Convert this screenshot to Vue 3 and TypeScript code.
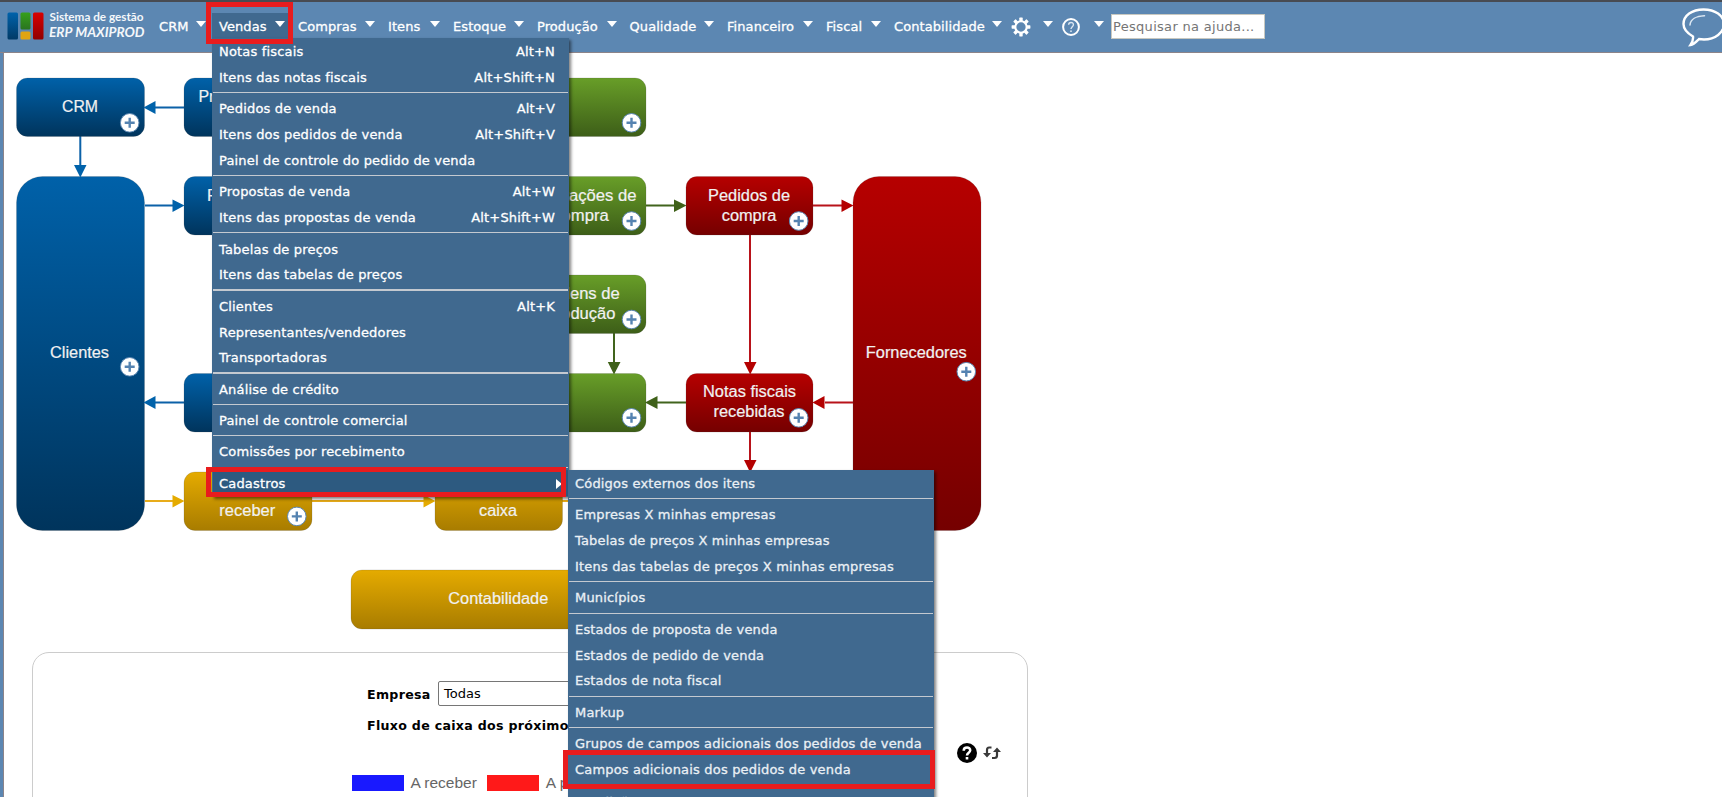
<script setup lang="ts">
interface NavItem { label: string; width: number; open?: boolean }
interface MenuItem { label: string; keys?: string; active?: boolean }
interface DiagramNode { x: number; y: number; w: number; h: number; tone: string; r?: number }
interface Label { x: number; y: number; text: string; len: number }

const nav: NavItem[] = [
  { label: 'CRM', width: 47 },
  { label: 'Vendas', width: 66, open: true },
  { label: 'Compras', width: 77 },
  { label: 'Itens', width: 52 },
  { label: 'Estoque', width: 71 },
  { label: 'Produção', width: 79.5 },
  { label: 'Qualidade', width: 84.5 },
  { label: 'Financeiro', width: 86 },
  { label: 'Fiscal', width: 55 },
  { label: 'Contabilidade', width: 108 },
]

const salesMenu: MenuItem[][] = [
  [{ label: 'Notas fiscais', keys: 'Alt+N' }, { label: 'Itens das notas fiscais', keys: 'Alt+Shift+N' }],
  [
    { label: 'Pedidos de venda', keys: 'Alt+V' },
    { label: 'Itens dos pedidos de venda', keys: 'Alt+Shift+V' },
    { label: 'Painel de controle do pedido de venda' },
  ],
  [{ label: 'Propostas de venda', keys: 'Alt+W' }, { label: 'Itens das propostas de venda', keys: 'Alt+Shift+W' }],
  [{ label: 'Tabelas de preços' }, { label: 'Itens das tabelas de preços' }],
  [{ label: 'Clientes', keys: 'Alt+K' }, { label: 'Representantes/vendedores' }, { label: 'Transportadoras' }],
  [{ label: 'Análise de crédito' }],
  [{ label: 'Painel de controle comercial' }],
  [{ label: 'Comissões por recebimento' }],
  [{ label: 'Cadastros', active: true }],
]

const recordsMenu: MenuItem[][] = [
  [{ label: 'Códigos externos dos itens' }],
  [
    { label: 'Empresas X minhas empresas' },
    { label: 'Tabelas de preços X minhas empresas' },
    { label: 'Itens das tabelas de preços X minhas empresas' },
  ],
  [{ label: 'Municípios' }],
  [{ label: 'Estados de proposta de venda' }, { label: 'Estados de pedido de venda' }, { label: 'Estados de nota fiscal' }],
  [{ label: 'Markup' }],
  [
    { label: 'Grupos de campos adicionais dos pedidos de venda' },
    { label: 'Campos adicionais dos pedidos de venda' },
  ],
  [{ label: 'Condições' }],
]

const nodes: DiagramNode[] = [
  { x: 16.5, y: 78, w: 128, h: 58.5, tone: 'blue' },
  { x: 184, y: 78, w: 128, h: 58.5, tone: 'blue' },
  { x: 518, y: 78, w: 128, h: 58.5, tone: 'green' },
  { x: 16.5, y: 176.5, w: 128, h: 354, tone: 'blue', r: 26 },
  { x: 184, y: 176.5, w: 128, h: 58.5, tone: 'blue' },
  { x: 518, y: 176.5, w: 128, h: 58.5, tone: 'green' },
  { x: 686, y: 176.5, w: 127, h: 58.5, tone: 'red' },
  { x: 853, y: 176.5, w: 128, h: 354, tone: 'red', r: 26 },
  { x: 518, y: 275, w: 128, h: 58.5, tone: 'green' },
  { x: 184, y: 373.5, w: 128, h: 58.5, tone: 'blue' },
  { x: 518, y: 373.5, w: 128, h: 58.5, tone: 'green' },
  { x: 686, y: 373.5, w: 127, h: 58.5, tone: 'red' },
  { x: 184, y: 472, w: 128, h: 58.5, tone: 'gold' },
  { x: 435, y: 472, w: 127.5, h: 58.5, tone: 'gold' },
  { x: 351, y: 570, w: 295, h: 59, tone: 'gold' },
]

const labels: Label[] = [
  { x: 80, y: 112, text: 'CRM', len: 36 },
  { x: 248.5, y: 101.5, text: 'Pré-propostas', len: 100 },
  { x: 79.5, y: 358, text: 'Clientes', len: 59 },
  { x: 248, y: 200.5, text: 'Pedidos de', len: 82 },
  { x: 580.5, y: 200.5, text: 'Solicitações de', len: 112 },
  { x: 581, y: 220.7, text: 'compra', len: 55.5 },
  { x: 749, y: 200.5, text: 'Pedidos de', len: 82 },
  { x: 749, y: 220.7, text: 'compra', len: 54.5 },
  { x: 916.3, y: 358, text: 'Fornecedores', len: 101 },
  { x: 581, y: 299, text: 'Ordens de', len: 77.5 },
  { x: 581, y: 319, text: 'produção', len: 69 },
  { x: 749.5, y: 397, text: 'Notas fiscais', len: 93 },
  { x: 749, y: 417.3, text: 'recebidas', len: 71 },
  { x: 247.3, y: 515.5, text: 'receber', len: 56 },
  { x: 498, y: 515.5, text: 'caixa', len: 38 },
  { x: 498.3, y: 604, text: 'Contabilidade', len: 100 },
]

const pluses: [number, number][] = [
  [129.7, 122.8], [631.5, 122.8], [631.5, 221], [798.7, 221], [631.5, 319.5],
  [631.5, 417.8], [798.7, 417.8], [966.3, 371.7], [129.7, 366.8], [296.8, 516.4],
]
</script>

<template>
  <div class="page">
    <header class="topbar">
      <svg class="logo" width="150" height="50" viewBox="0 2 150 50">
        <defs>
          <linearGradient id="lb" x2="0" y2="1"><stop stop-color="#0062ab" /><stop offset="1" stop-color="#013a66" /></linearGradient>
          <linearGradient id="lg" x2="0" y2="1"><stop stop-color="#36a01b" /><stop offset="1" stop-color="#2a7420" /></linearGradient>
          <linearGradient id="lr" x2="0" y2="1"><stop stop-color="#d90000" /><stop offset="1" stop-color="#900000" /></linearGradient>
        </defs>
        <rect x="7.5" y="12.5" width="10.5" height="27" rx="1.5" fill="url(#lb)" />
        <rect x="20.5" y="12.5" width="10" height="17" rx="1.5" fill="url(#lg)" />
        <rect x="20.5" y="31.5" width="10" height="8" rx="1.5" fill="#e0a412" />
        <rect x="33" y="12.5" width="10.5" height="27" rx="1.5" fill="url(#lr)" />
        <text x="49.5" y="20.5" font-size="11" font-weight="700" textLength="94" lengthAdjust="spacingAndGlyphs">Sistema de gestão</text>
        <text x="49" y="36.8" font-size="12.3" font-weight="700" font-style="italic" textLength="95.5" lengthAdjust="spacingAndGlyphs">ERP MAXIPROD</text>
      </svg>
      <nav class="nav">
        <div v-for="n in nav" :key="n.label" class="nav-item" :class="{ open: n.open }" :style="{ width: n.width + 'px' }">
          <span>{{ n.label }}</span><i class="caret"></i>
        </div>
      </nav>
      <svg class="gear" width="20" height="20" viewBox="-10 -10 20 20">
        <g fill="#fff">
          <rect v-for="k in 8" :key="k" x="-1.7" y="-9.4" width="3.4" height="4.5" rx=".6" :transform="`rotate(${k * 45})`" />
        </g>
        <circle r="5.7" fill="#5c87b2" stroke="#fff" stroke-width="2.1" />
      </svg>
      <i class="caret gear-caret"></i>
      <svg class="help" width="20" height="20" viewBox="-10 -10 20 20">
        <circle r="7.9" fill="none" stroke="#fff" stroke-width="2" />
        <path d="M-2.4-2.2C-2.3-5.4 2.5-5.3 2.4-2.2 2.3-.4 0-.2 0 2" fill="none" stroke="#dbe6f1" stroke-width="1.4" />
        <circle cy="4.2" r=".9" fill="#dbe6f1" />
      </svg>
      <i class="caret help-caret"></i>
      <input class="search" type="text" placeholder="Pesquisar na ajuda..." />
      <svg class="chat" width="40" height="42" viewBox="0 0 40 42">
        <path d="M11 28.5C5 25 1.5 21.5 1.5 16 1.5 7.5 10 1.5 21.5 1.5S42 7.5 42 16 33 31.5 22 31.5L17 31C14 34 12 36.5 8.5 37 10.5 34 11.5 32 11 28.5Z" fill="none" stroke="#fff" stroke-width="2.4" />
        <path d="M8 17C8.5 11.5 14 8 22.5 7.8" fill="none" stroke="#dce8f3" stroke-width="1.5" stroke-linecap="round" />
      </svg>
    </header>

    <main class="content">
      <svg class="diagram" width="1040" height="590" viewBox="4 53 1040 590">
        <defs>
          <linearGradient id="blue" x2="0" y2="1"><stop stop-color="#0061a9" /><stop offset="1" stop-color="#00345c" /></linearGradient>
          <linearGradient id="green" x2="0" y2="1"><stop stop-color="#689e28" /><stop offset="1" stop-color="#3d5e18" /></linearGradient>
          <linearGradient id="red" x2="0" y2="1"><stop stop-color="#b60000" /><stop offset="1" stop-color="#750000" /></linearGradient>
          <linearGradient id="gold" x2="0" y2="1"><stop stop-color="#e5ab00" /><stop offset="1" stop-color="#a87c00" /></linearGradient>
        </defs>
        <g fill="none" stroke-width="2">
          <path d="M155 107.5H184M80.3 136V165M145 205.5H173M155 402.5H184" stroke="#0b61a8" />
          <path d="M646 205.5H675M614 333V363M657 402.5H686" stroke="#41641d" />
          <path d="M813 205.5H842M750 235V363M825 402.5H853M750 432V461" stroke="#b8131a" />
          <path d="M145 501H173M312 501H424M562 501H602" stroke="#e8ac1a" />
        </g>
        <rect
          v-for="(n, i) in nodes" :key="i" :x="n.x" :y="n.y" :width="n.w" :height="n.h" :rx="n.r ?? 11"
          :fill="`url(#${n.tone})`" stroke="#444" stroke-opacity=".25" stroke-width=".7"
        />
        <path d="M143.5 107.5 155.5 101V114ZM74 165H86.5L80.3 177.5ZM172.5 199.5V212L184.5 205.5ZM143.5 402.5 155.5 396V409Z" fill="#0062aa" />
        <path d="M674 199.5V212L686.5 205.5ZM607.8 362H620.5L614 374.5ZM645 402.5 657.5 396V409Z" fill="#3f6119" />
        <path d="M841.5 199.5V212L853.5 205.5ZM744 362H756.5L750.2 374.5ZM812.5 402.5 824.5 396V409ZM744 460H756.5L750.2 472.5Z" fill="#b40000" />
        <path d="M172.5 495V507.5L184.5 501ZM423.5 495V507.5L435.5 501Z" fill="#e5ab00" />
        <text v-for="(l, i) in labels" :key="i" :x="l.x" :y="l.y" :textLength="l.len" lengthAdjust="spacingAndGlyphs">{{ l.text }}</text>
        <g v-for="([x, y], i) in pluses" :key="i" :transform="`translate(${x} ${y})`">
          <circle r="9.3" fill="#fff" stroke="#5c87b2" stroke-width="1" />
          <path d="M-5 0H5M0-5V5" stroke="#5583b1" stroke-width="2.4" />
        </g>
      </svg>

      <section class="panel">
        <div class="field">
          <b>Empresa</b>
          <div class="select">Todas</div>
        </div>
        <div class="title-row">
          <b>Fluxo de caixa dos próximos 30 dias</b>
        </div>
        <div class="tools">
          <svg width="20" height="20" viewBox="-10 -10 20 20">
            <circle r="10" fill="#000" />
            <path d="M-3.3-2.3C-3.3-6.5 3.5-6.3 3.2-2.5 3-.2 0-.3 0 2.5" fill="none" stroke="#fff" stroke-width="2.5" />
            <rect x="-1.3" y="4" width="2.6" height="2.5" fill="#fff" />
          </svg>
          <svg width="18" height="14" viewBox="0 0 18 14">
            <g fill="none" stroke="#3a3a3a" stroke-width="2.2">
              <path d="M8.5 1.5H6.2Q4 1.5 4 4V8" />
              <path d="M9 12H11.5Q14 12 14 9.5V5" />
            </g>
            <path d="M0 7H8L4 11.5ZM10 6H18L14 1.5Z" fill="#3a3a3a" />
          </svg>
        </div>
        <div class="legend">
          <i class="swatch blue"></i><span>A receber</span><i class="swatch red"></i><span>A pagar</span>
        </div>
        <div class="axis">R$ 400,00</div>
      </section>
    </main>

    <ul class="menu sales">
      <template v-for="(group, g) in salesMenu" :key="g">
        <li v-if="g" class="rule"></li>
        <li v-for="m in group" :key="m.label" class="row" :class="{ active: m.active }">
          <span>{{ m.label }}</span><span v-if="m.keys" class="keys">{{ m.keys }}</span><i v-if="m.active" class="sub"></i>
        </li>
      </template>
    </ul>
    <ul class="menu records">
      <template v-for="(group, g) in recordsMenu" :key="g">
        <li v-if="g" class="rule"></li>
        <li v-for="m in group" :key="m.label" class="row"><span>{{ m.label }}</span></li>
      </template>
    </ul>

    <div class="mark mark-nav"></div>
    <div class="mark mark-row"></div>
    <div class="mark mark-target"></div>
  </div>
</template>

<style>
body { margin: 0; background: #fff; overflow: hidden; }
</style>

<style scoped>
.page {
  position: relative; box-sizing: border-box; width: 1722px; height: 797px; overflow: hidden;
  background: #fff; font-family: "DejaVu Sans", Verdana, sans-serif; font-size: 13px; color: #000;
  display: flex; flex-direction: column;
}
.topbar {
  box-sizing: border-box; height: 53px; flex: none; display: flex; align-items: flex-start;
  background: #5c87b2; border-top: 2px solid #484b52; border-bottom: 1px solid #8c8489; color: #fff;
}
.logo { flex: none; font-family: Lato, sans-serif; }
.logo text { fill: #f4f7fa; }
.nav { display: flex; gap: 13px; margin: 11px 0 0 9px; flex: none; }
.nav-item { display: flex; height: 25px; line-height: 27px; justify-content: space-between; white-space: nowrap; letter-spacing: .08px; -webkit-text-stroke: .3px #fff; }
.nav-item.open { background: #40698f; box-shadow: -7px 0 #40698f, 3px 0 #40698f; }
.caret { width: 0; height: 0; flex: none; border: 5px solid transparent; border-top: 6px solid #fff; border-bottom: 0; margin-top: 8px; }
.gear { margin: 15px 0 0 9px; flex: none; }
.gear-caret { margin: 19px 0 0 12px; }
.help { margin: 15px 0 0 8px; flex: none; }
.help-caret { margin: 19px 0 0 13px; }
.search {
  box-sizing: border-box; width: 154px; height: 25px; margin: 12px 0 0 7px; padding: 0 1px; flex: none;
  border: 1px solid #c8c8c0; background: #fff; font: 13px "DejaVu Sans", sans-serif; border-radius: 0; letter-spacing: .3px;
}
.search::placeholder { color: #757575; opacity: 1; }
.chat { margin: 6px 0 0 auto; flex: none; }
.content {
  flex: 1; min-height: 0; overflow: hidden; display: flex; flex-direction: column; align-items: flex-start;
  border-left: 1px solid #8c8489; box-shadow: -3px 0 #5c87b2; margin-left: 3px;
}
.diagram { display: block; flex: none; }
.diagram text {
  font-family: "Liberation Sans", Arial, sans-serif; font-size: 16px; fill: #f1f1f1; text-anchor: middle;
  stroke: #f1f1f1; stroke-width: .2px;
}
.panel {
  position: relative; box-sizing: border-box; width: 996px; height: 400px; margin: 9px 0 0 28px; flex: none;
  border: 1px solid #ccc; border-radius: 17px; padding: 26px 0 0 334px;
}
.panel b { font-size: 12.6px; letter-spacing: .3px; white-space: nowrap; }
.field { display: flex; align-items: center; gap: 7.5px; height: 28px; }
.field b { padding-top: 3px; }
.select { box-sizing: border-box; width: 220px; height: 25px; border: 1px solid #767676; border-radius: 2px; padding-left: 5px; line-height: 24px; font-size: 13px; }
.title-row { display: flex; align-items: center; height: 20px; margin-top: 8px; }
.tools { position: absolute; left: 924px; top: 90px; display: flex; align-items: center; gap: 6px; }
.legend { display: flex; align-items: center; gap: 6.5px; margin: 38px 0 0 -15px; font: 15.5px/20px "Liberation Sans", Arial, sans-serif; color: #666; }
.swatch { width: 52px; height: 16px; }
.swatch.blue { background: #1919ff; }
.swatch.red { background: #ff1919; margin-left: 4px; }
.axis { margin: 1px 0 0 -302px; font: 15px/20px "Liberation Sans", Arial, sans-serif; color: #666; }
.menu {
  position: absolute; box-sizing: border-box; margin: 0; padding: 0 1px; list-style: none; letter-spacing: .18px;
  background: #40698f; color: #fff; box-shadow: 2px 2px 3px rgba(0, 0, 0, .5);
}
.sales { left: 212px; top: 38px; width: 357px; height: 459px; padding-top: .62px; }
.records { left: 568px; top: 470px; width: 366px; height: 340px; padding-top: .55px; }
.row {
  box-sizing: border-box; display: flex; justify-content: space-between; align-items: center; height: 25.8px;
  padding: .3px 13px 0 6px; white-space: nowrap; -webkit-text-stroke: .3px #fff;
}
.row.active { background: #2d5a80; padding-right: 6px; }
.records .row { -webkit-text-stroke-color: #e6edf3; color: #eef2f6; }
.records .row:last-child { padding-top: 3px; }
.rule { height: 1.25px; margin: 1.8px 0 2.55px; background: #c4c9d0; }
.sub { width: 0; height: 0; border: 5px solid transparent; border-left: 6px solid #fff; border-right: 0; margin-top: 2px; }
.mark { position: absolute; box-sizing: border-box; border: 5px solid #e81c1e; }
.mark-nav { left: 206px; top: 2px; width: 87px; height: 42px; }
.mark-row { left: 206px; top: 467px; width: 360px; height: 30px; }
.mark-target { left: 563px; top: 750px; width: 372px; height: 39px; }
</style>
